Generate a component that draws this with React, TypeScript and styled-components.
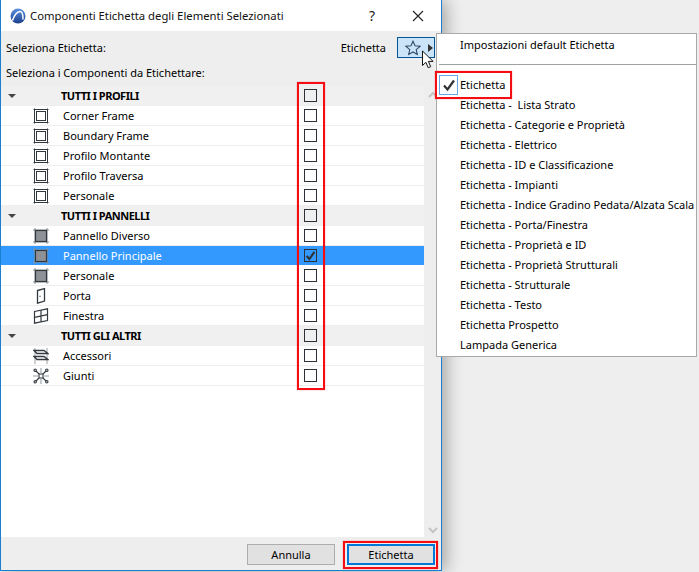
import React from "react";
import styled, { createGlobalStyle } from "styled-components";

const Global = createGlobalStyle`
  html, body { margin: 0; padding: 0; background: #eeeeee; }
  * { box-sizing: border-box; }
`;

const FONT = `"Noto Sans", "Open Sans", Arial, sans-serif`;

const Screen = styled.div`
  position: relative;
  width: 699px;
  height: 572px;
  overflow: hidden;
  background: #eeeeee;
  font-family: ${FONT};
  font-size: 11px;
  color: #000000;
`;

const Dialog = styled.div`
  width: 442px;
  height: 571px;
  display: flex;
  flex-direction: column;
  background: #eeeeee;
  border: 1px solid #1a7fd0;
  border-top: 0;
  box-shadow: 4px 0 16px rgba(0, 0, 0, 0.32);
`;

const TitleBar = styled.div`
  height: 31px;
  flex: none;
  display: flex;
  align-items: center;
  background: #ffffff;
  padding-left: 9px;
`;

const TitleText = styled.span`
  margin-left: 4px;
  font-size: 11.3px;
  flex: 1;
  color: #111;
`;

const TitleButton = styled.span`
  width: 46px;
  text-align: center;
  font-size: 14px;
  display: flex;
  justify-content: center;
  color: #222;
`;

const LabelRow = styled.div`
  height: 21px;
  margin-top: 6px;
  padding: 0 6px 0 5px;
  display: flex;
  align-items: center;
  flex: none;
`;

const LabelText = styled.span`
  flex: 1;
`;

const CurrentLabel = styled.span`
  margin-right: 11px;
`;

const StarButton = styled.div`
  width: 38px;
  height: 21px;
  background: #cce4f7;
  border: 1px solid #005499;
  display: flex;
  align-items: center;
  padding-left: 7px;
  gap: 7px;
`;

const ArrowRight = styled.span`
  width: 0;
  height: 0;
  border-left: 5px solid #333;
  border-top: 4px solid transparent;
  border-bottom: 4px solid transparent;
`;

const SectionLabel = styled.div`
  height: 28px;
  padding: 6px 5px 0;
  line-height: 18px;
  flex: none;
`;

const ListArea = styled.div`
  flex: 1;
  display: flex;
  min-height: 0;
`;

const List = styled.div`
  width: 423px;
  background: #ffffff;
`;

const Row = styled.div<{ $kind: "head" | "item" | "selected" }>`
  height: 20px;
  display: grid;
  grid-template-columns: 62px 241px 13px;
  align-items: center;
  background: ${(p) =>
    p.$kind === "head" ? "#f0f0f0" : p.$kind === "selected" ? "#3399ff" : "#ffffff"};
  border-bottom: 1px solid ${(p) => (p.$kind === "selected" ? "#ffffff" : "#eeeeee")};
  color: ${(p) => (p.$kind === "selected" ? "#ffffff" : "#000000")};
`;

const Caret = styled.span`
  width: 0;
  height: 0;
  margin-left: 7px;
  margin-top: 1px;
  border-top: 4px solid #444;
  border-left: 4px solid transparent;
  border-right: 4px solid transparent;
`;

const IconCell = styled.span`
  display: flex;
  padding-left: 32px;
`;

const HeadName = styled.span`
  font-weight: 700;
  margin-left: -2px;
  letter-spacing: -0.5px;
`;

const Check = styled.span`
  width: 13px;
  height: 13px;
  margin-top: -1px;
  border: 1px solid #2a3036;
  display: flex;
  align-items: center;
  justify-content: center;
`;

const ScrollTrack = styled.div`
  flex: 1;
  display: flex;
  flex-direction: column;
  justify-content: space-between;
  align-items: center;
  padding: 5px 0 3px;
`;

const Footer = styled.div`
  height: 33px;
  flex: none;
  display: flex;
  justify-content: flex-end;
  align-items: flex-start;
  gap: 12px;
  padding: 7px 6px 0 0;
`;

const Btn = styled.div<{ $primary?: boolean }>`
  width: 88px;
  height: 21px;
  display: flex;
  align-items: center;
  justify-content: center;
  background: #e1e1e1;
  border: ${(p) => (p.$primary ? "2px solid #0078d7" : "1px solid #adadad")};
`;

const Menu = styled.div`
  position: absolute;
  left: 436px;
  top: 33px;
  width: 261px;
  height: 324px;
  background: #ffffff;
  border: 1px solid #a9a9a9;
  padding-top: 1px;
`;

const MenuItem = styled.div`
  height: 20px;
  line-height: 20px;
  padding-left: 23px;
  position: relative;
  white-space: pre;
`;

const MenuSep = styled.div`
  height: 1px;
  background: #a0a0a0;
  margin: 9px 0 10px 2px;
`;

const CheckMark = styled.span`
  position: absolute;
  left: 2px;
  top: 0;
  width: 19px;
  height: 20px;
  border: 1px solid #66a7e8;
  display: flex;
  align-items: center;
  justify-content: center;
`;

const Callout = styled.div<{ $l: number; $t: number; $w: number; $h: number }>`
  position: absolute;
  left: ${(p) => p.$l}px;
  top: ${(p) => p.$t}px;
  width: ${(p) => p.$w}px;
  height: ${(p) => p.$h}px;
  border: 2px solid #f50d14;
  box-shadow: 0 0 1px rgba(255, 0, 0, 0.6);
  pointer-events: none;
`;

const Cursor = styled.svg`
  position: absolute;
  left: 421px;
  top: 50px;
`;

const Logo = () => (
  <svg width="16" height="16" viewBox="0 0 16 16">
    <defs>
      <linearGradient id="lg" x1="0" y1="0" x2="0" y2="1">
        <stop offset="0" stopColor="#5b92e0" />
        <stop offset="1" stopColor="#1d3f8c" />
      </linearGradient>
    </defs>
    <circle cx="8" cy="8" r="7.5" fill="url(#lg)" />
    <path d="M2.5 12.5C4 8 7 4 10 3.6c2.3-.3 3 3 3 8" fill="none" stroke="#fff" strokeWidth="1.5" />
  </svg>
);

const stroke = "#33393f";

const FrameIcon = () => (
  <svg width="16" height="16" viewBox="0 0 16 16" fill="none">
    <path
      d="M0 1.5h3M13 1.5h3M0 14.5h3M13 14.5h3M1.5 0v3M14.5 0v3M1.5 13v3M14.5 13v3"
      stroke="#9aa0a5"
      strokeWidth="1"
    />
    <rect x="1.5" y="1.5" width="13" height="13" stroke={stroke} strokeWidth="1" />
    <rect x="3.5" y="3.5" width="9" height="9" stroke={stroke} strokeWidth="1" />
  </svg>
);

const PanelIcon = () => (
  <svg width="16" height="16" viewBox="0 0 16 16" fill="none">
    <path d="M0 2h16M0 14h16M2 0v16M14 0v16" stroke="#8a9095" strokeWidth="1" />
    <rect x="2.5" y="2.5" width="11" height="11" fill="#8e9296" stroke={stroke} strokeWidth="1.2" />
  </svg>
);

const DoorIcon = () => (
  <svg width="16" height="16" viewBox="0 0 16 16" fill="none">
    <path d="M4.5 2.5 11.5.6v12.4l-7 2.2z" stroke={stroke} strokeWidth="1.3" />
    <path d="M6.5 8.5l1-.4" stroke={stroke} strokeWidth="1.2" />
  </svg>
);

const WindowIcon = () => (
  <svg width="16" height="16" viewBox="0 0 16 16" fill="none">
    <path d="M1.5 3.5 14.5.8v11.7l-13 2.7z" stroke={stroke} strokeWidth="1.2" />
    <path d="M1.5 9.3l13-2.7M8 2.2v11.6" stroke={stroke} strokeWidth="1.2" />
  </svg>
);

const AccessoryIcon = () => (
  <svg width="16" height="16" viewBox="0 0 16 16" fill="none">
    <path d="M2 0v16M14 0v16" stroke="#9aa0a5" strokeWidth="1" />
    <path d="M1 2.5h10l4 3H4zM1 8.5h10l4 3H4z" stroke={stroke} strokeWidth="1.3" />
  </svg>
);

const JointIcon = () => (
  <svg width="16" height="16" viewBox="0 0 16 16" fill="none" stroke={stroke} strokeWidth="1.1">
    <rect x="6" y="6" width="4" height="4" />
    <path d="M6 6 3 3M10 6l3-3M6 10l-3 3M10 10l3 3" />
    <path d="M0 8h6M10 8h6M8 0v6M8 10v6" stroke="#9aa0a5" />
    <circle cx="2.2" cy="2.2" r="1.2" />
    <circle cx="13.8" cy="2.2" r="1.2" />
    <circle cx="2.2" cy="13.8" r="1.2" />
    <circle cx="13.8" cy="13.8" r="1.2" />
  </svg>
);

type RowData = {
  name: string;
  head?: boolean;
  icon?: React.FC;
  selected?: boolean;
};

const rows: RowData[] = [
  { name: "TUTTI I PROFILI", head: true },
  { name: "Corner Frame", icon: FrameIcon },
  { name: "Boundary Frame", icon: FrameIcon },
  { name: "Profilo Montante", icon: FrameIcon },
  { name: "Profilo Traversa", icon: FrameIcon },
  { name: "Personale", icon: FrameIcon },
  { name: "TUTTI I PANNELLI", head: true },
  { name: "Pannello Diverso", icon: PanelIcon },
  { name: "Pannello Principale", icon: PanelIcon, selected: true },
  { name: "Personale", icon: PanelIcon },
  { name: "Porta", icon: DoorIcon },
  { name: "Finestra", icon: WindowIcon },
  { name: "TUTTI GLI ALTRI", head: true },
  { name: "Accessori", icon: AccessoryIcon },
  { name: "Giunti", icon: JointIcon },
];

const menuItems = [
  "Etichetta",
  "Etichetta -  Lista Strato",
  "Etichetta - Categorie e Proprietà",
  "Etichetta - Elettrico",
  "Etichetta - ID e Classificazione",
  "Etichetta - Impianti",
  "Etichetta - Indice Gradino Pedata/Alzata Scala",
  "Etichetta - Porta/Finestra",
  "Etichetta - Proprietà e ID",
  "Etichetta - Proprietà Strutturali",
  "Etichetta - Strutturale",
  "Etichetta - Testo",
  "Etichetta Prospetto",
  "Lampada Generica",
];

const Tick = ({ size, width }: { size: number; width: number }) => (
  <svg width={size} height={size} viewBox="0 0 14 14" fill="none">
    <path d="M2 7.5 5.5 11.5 12 2.5" stroke="#2f3338" strokeWidth={width} />
  </svg>
);

export default function App() {
  return (
    <Screen>
      <Global />
      <Dialog>
        <TitleBar>
          <Logo />
          <TitleText>Componenti Etichetta degli Elementi Selezionati</TitleText>
          <TitleButton>?</TitleButton>
          <TitleButton>
            <svg width="12" height="12" viewBox="0 0 12 12" fill="none">
              <path d="M1 1l10 10M11 1 1 11" stroke="#222" strokeWidth="1.1" />
            </svg>
          </TitleButton>
        </TitleBar>
        <LabelRow>
          <LabelText>Seleziona Etichetta:</LabelText>
          <CurrentLabel>Etichetta</CurrentLabel>
          <StarButton>
            <svg width="16" height="16" viewBox="0 0 16 16" fill="none">
              <path
                d="M8 1.2l2 4.6 5 .5-3.8 3.3 1.1 4.9L8 12l-4.3 2.5 1.1-4.9L1 6.3l5-.5z"
                stroke="#2c4a66"
                strokeWidth="1.1"
              />
            </svg>
            <ArrowRight />
          </StarButton>
        </LabelRow>
        <SectionLabel>Seleziona i Componenti da Etichettare:</SectionLabel>
        <ListArea>
          <List>
            {rows.map((r, i) => {
              const Icon = r.icon;
              return (
                <Row key={i} $kind={r.head ? "head" : r.selected ? "selected" : "item"}>
                  {r.head ? <Caret /> : <IconCell>{Icon && <Icon />}</IconCell>}
                  {r.head ? <HeadName>{r.name}</HeadName> : <span>{r.name}</span>}
                  <Check>{r.selected && <Tick size={11} width={2.8} />}</Check>
                </Row>
              );
            })}
          </List>
          <ScrollTrack>
            <svg width="10" height="8" viewBox="0 0 10 8" fill="none">
              <path d="M1 6l4-4 4 4" stroke="#c4c4c4" strokeWidth="2" />
            </svg>
            <svg width="10" height="8" viewBox="0 0 10 8" fill="none">
              <path d="M1 2l4 4 4-4" stroke="#c4c4c4" strokeWidth="2" />
            </svg>
          </ScrollTrack>
        </ListArea>
        <Footer>
          <Btn>Annulla</Btn>
          <Btn $primary>Etichetta</Btn>
        </Footer>
      </Dialog>

      <Menu>
        <MenuItem>Impostazioni default Etichetta</MenuItem>
        <MenuSep />
        {menuItems.map((m, i) => (
          <MenuItem key={m}>
            {i === 0 && (
              <CheckMark>
                <Tick size={14} width={2.2} />
              </CheckMark>
            )}
            {m}
          </MenuItem>
        ))}
      </Menu>

      <Cursor width="15" height="20" viewBox="0 0 15 20">
        <path
          d="M1.5 1v14.5l3.4-3.2 2.3 5.4 2.5-1-2.3-5.3h4.7z"
          fill="#fff"
          stroke="#111"
          strokeWidth="1"
        />
      </Cursor>

      <Callout $l={297} $t={82} $w={28} $h={308} />
      <Callout $l={435} $t={71} $w={77} $h={28} />
      <Callout $l={343} $t={541} $w={95} $h={28} />
    </Screen>
  );
}
